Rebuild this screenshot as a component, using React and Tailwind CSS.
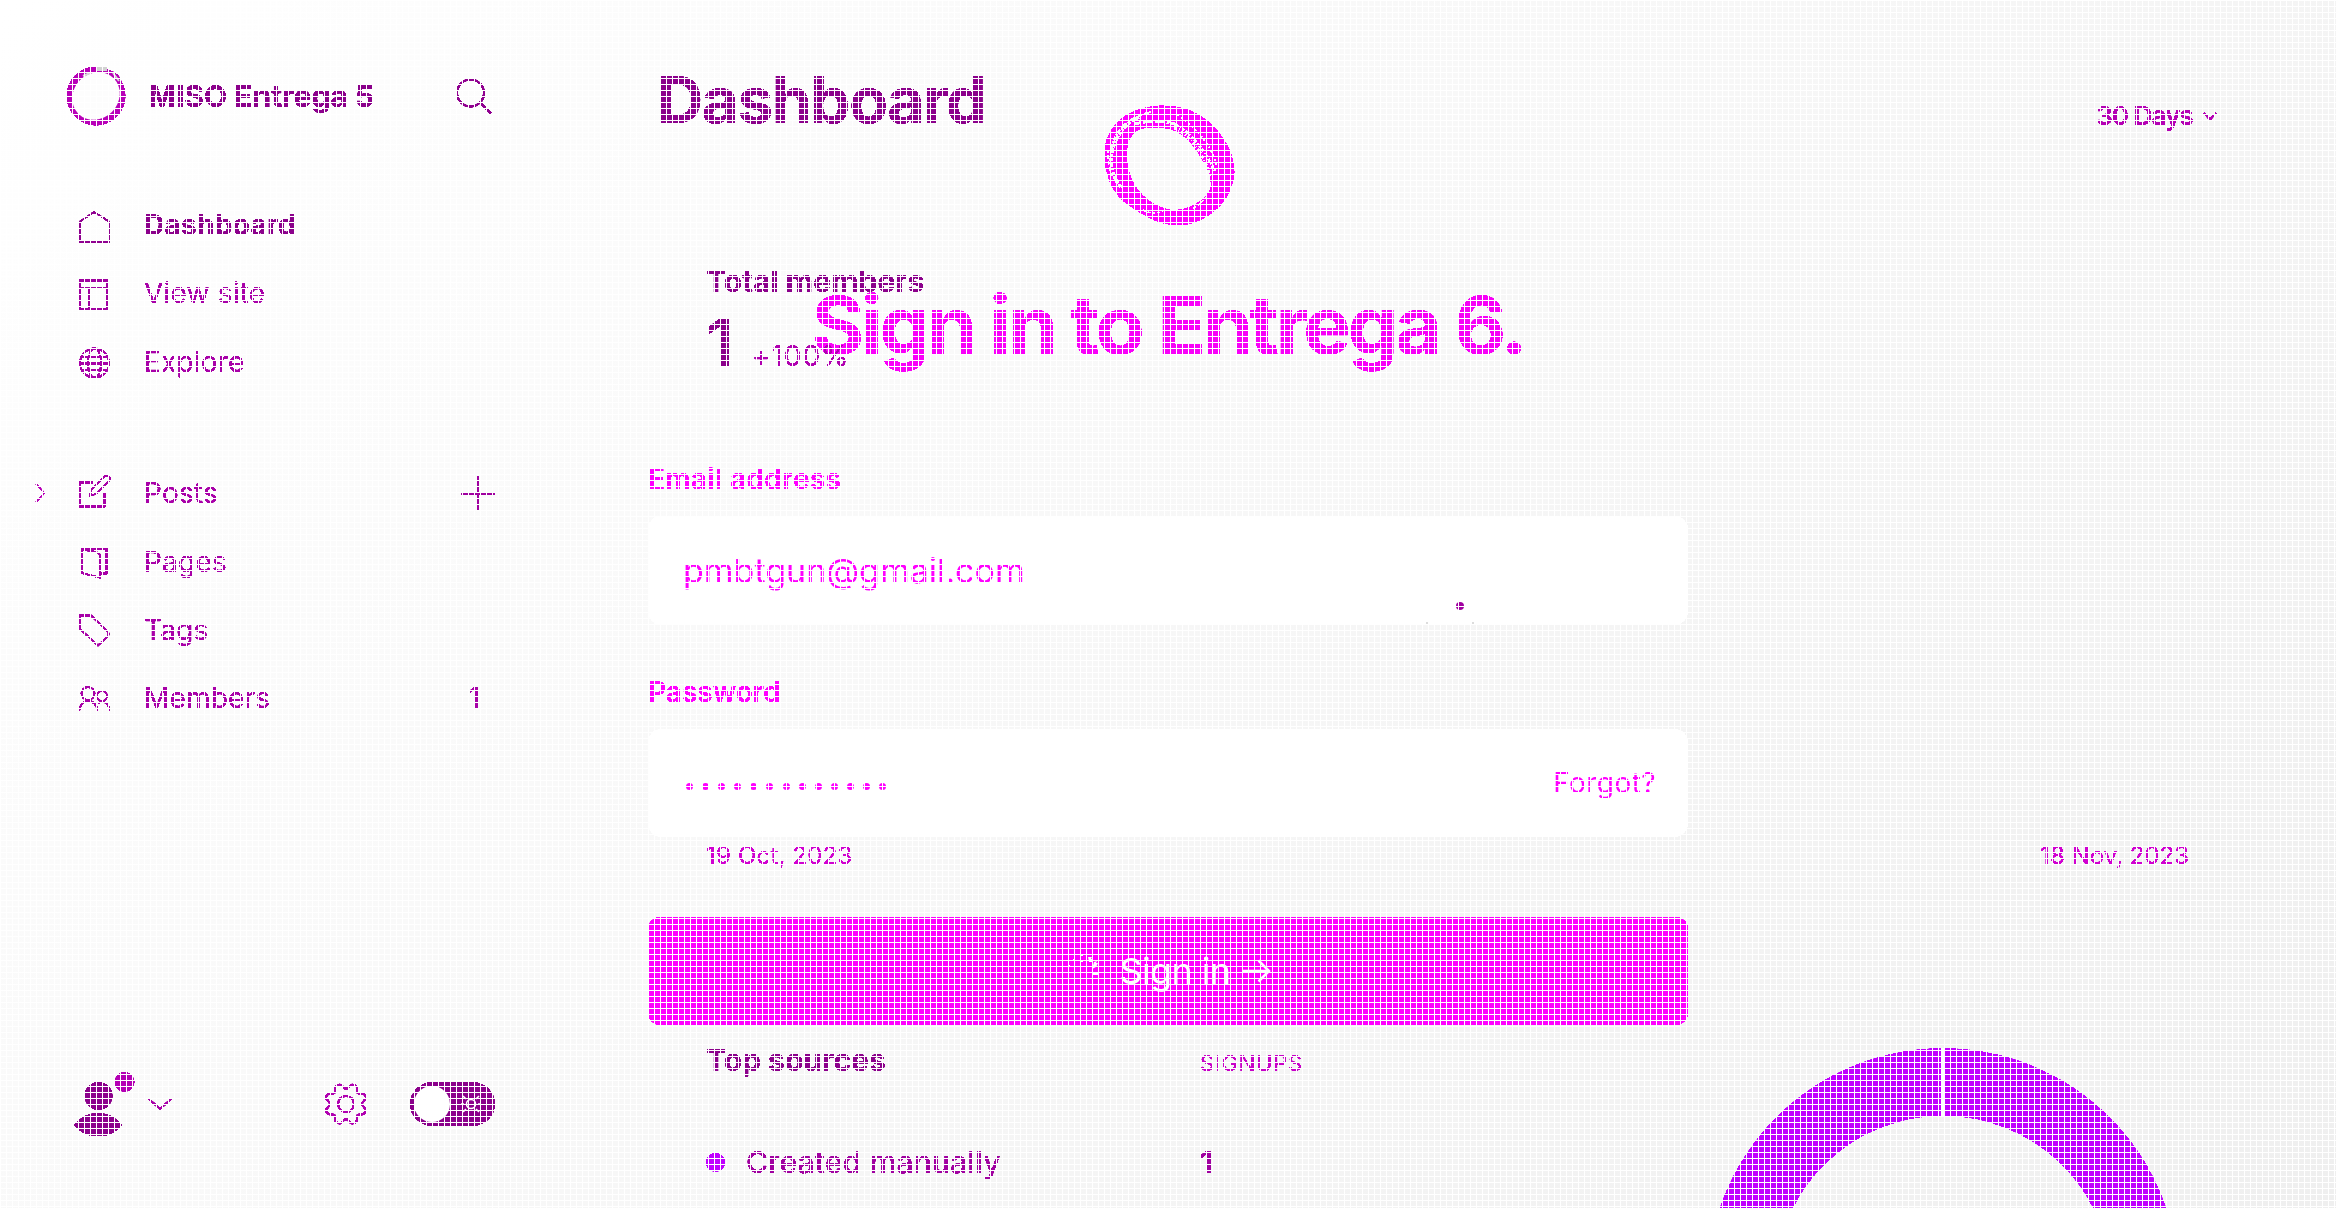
import React from "react";

// Closed smooth outline through the midpoints of a list of points
const blob = (pts) => {
  const mid = (a, b) => [(a[0] + b[0]) / 2, (a[1] + b[1]) / 2];
  const start = mid(pts[pts.length - 1], pts[0]);
  return (
    `M${start}` +
    pts.map((p, i) => `Q${p} ${mid(p, pts[(i + 1) % pts.length])}`).join("") +
    "Z"
  );
};

const bigOuter = blob([[58, -1], [90, 5], [116, 27], [130, 55], [129, 80], [115, 104], [86, 121], [58, 120], [34, 108], [10, 91], [-1, 62], [-1, 37], [11, 16], [31, 4]]);
const bigInner = blob([[57, 23], [70, 25], [88, 39], [107, 72], [104, 91], [78, 106], [54, 103], [32, 86], [22, 62], [22, 37], [33, 23]]);

function LoginLogo() {
  return (
    <svg width="130" height="120" viewBox="0 0 130 120" className="ml-[3px] block shrink-0" fill="none" shapeRendering="crispEdges">
      <path d={bigOuter + bigInner} fill="#ff00ff" fillRule="evenodd" />
      <g stroke="#f8f8f8">
        <path d="M67 18C84 26 98 42 110 66" strokeWidth="3" strokeDasharray="2 2 3 2 1 2" />
        <path d="M69 23C86 30 98 48 106 72" strokeWidth="2.5" strokeDasharray="3 2 1 2" />
        <path d="M72 10C90 22 106 38 112 62" strokeWidth="1.8" strokeDasharray="2 3 2 2" />
        <path d="M30 19C45 15 60 15 72 20" strokeWidth="3" strokeDasharray="6 2 3 1" />
        <path d="M46 7C22 12 7 28 6 48" strokeWidth="2" strokeDasharray="4 1 2 2" />
        <path d="M34 12C18 20 8 34 6 54C6 66 10 76 16 82" strokeWidth="3.5" strokeDasharray="5 1 2 2 3 1" />
        <path d="M3 46C2 64 8 76 18 84" strokeWidth="1.4" strokeDasharray="2 2 1 1" />
        <path d="M38 105C44 108 50 109 58 107M88 103C94 100 98 96 101 92" strokeWidth="1.6" strokeDasharray="3 2" />
      </g>
    </svg>
  );
}

function SiteLogo() {
  return (
    <svg width="62" height="60" viewBox="0 0 62 60" className="block shrink-0" fill="none">
      <circle cx="31" cy="30" r="29.5" fill="#b800b8" />
      <path d="M44 4Q58 8 57 22L50 16Z" fill="#b800b8" />
      <ellipse cx="31" cy="30" rx="25" ry="22.500" transform="rotate(-45 31 30)" fill="#fdfdfd" />
      <path d="M31 3H42" stroke="#d2d2d2" strokeWidth="4" />
      <path d="M18 10L25 7M48 7L54 15" stroke="#d8d8d8" strokeWidth="2" />
    </svg>
  );
}

function NavIcon({ children, color = "#a800a8" }) {
  return (
    <svg width="34" height="40" viewBox="0 0 34 40" className="block shrink-0" fill="none" stroke={color} strokeWidth="1.8">
      {children}
    </svg>
  );
}

const main = [
  {
    label: "Dashboard",
    active: true,
    icon: <NavIcon color="#900090"><path d="M2 36.5V16.5L16 7L31 16.5V36.5Z" /></NavIcon>,
  },
  {
    label: "View site",
    icon: <NavIcon color="#a000a0"><path d="M2 7.5H29.5V36H2ZM2 15H29.5M11.5 15V36" /></NavIcon>,
  },
  {
    label: "Explore",
    icon: (
      <NavIcon>
        <circle cx="16.5" cy="21" r="14.5" />
        <ellipse cx="16.5" cy="21" rx="6.5" ry="14.5" />
        <path d="M3.5 15H29.5M2 21.5H31M3.5 28H29.5" />
      </NavIcon>
    ),
  },
];

const content = [
  {
    label: "Posts",
    chevron: true,
    plus: true,
    icon: <NavIcon><path d="M15 9.5H2V33.5H26.5V19M12 22.5L13.5 16.5L26 4Q29 1 31.5 4Q33 6.5 30.5 8.5L18 21Z" /></NavIcon>,
  },
  {
    label: "Pages",
    icon: <NavIcon><path d="M4 7H28.5V31.5H22M4 7L19 10.5Q22 11 22 14V35.5L4 31Z" /></NavIcon>,
  },
  {
    label: "Tags",
    icon: <NavIcon><path d="M2 5.5H13L30 22Q31.5 24 30 26L20 35.5L2 19Z" /></NavIcon>,
  },
  {
    label: "Members",
    count: "1",
    icon: (
      <NavIcon>
        <circle cx="10" cy="15.5" r="6.5" />
        <circle cx="24" cy="18" r="5" />
        <path d="M1.5 32.5Q2.5 23 10 23Q18 23 19.5 32.5M20.5 25.5Q23 23 26 24Q31 26 31.5 32.5" />
      </NavIcon>
    ),
  },
];

function NavRow({ item }) {
  return (
    <li className="flex h-[68.3px] items-center text-[28px] leading-none tracking-[0.2px] text-[#a800a8]">
      <span className="w-11 shrink-0">
        {item.chevron && (
          <svg width="12" height="20" viewBox="0 0 12 20" fill="none" stroke="#b800b8" strokeWidth="1.6" className="block">
            <path d="M2 1L10.5 10L2 19" />
          </svg>
        )}
      </span>
      {item.icon}
      <span className={item.active ? "ml-8 font-bold tracking-[0.29px] text-[#8b008b]" : "ml-8"}>{item.label}</span>
      {item.plus && (
        <svg width="34" height="34" viewBox="0 0 34 34" fill="none" stroke="#a000a0" strokeWidth="2" className="ml-auto block">
          <path d="M17 0V34M0 17.5H34" />
        </svg>
      )}
      {item.count && <span className="mr-[15px] ml-auto">{item.count}</span>}
    </li>
  );
}

function Sidebar() {
  return (
    <aside className="flex w-[495px] shrink-0 flex-col pt-[66px] pb-[72px] pl-[34px] [filter:url(#crisp)]">
      <div className="flex h-[60px] items-center pl-[31px]">
        <SiteLogo />
        <span className="ml-[21px] text-[30px] leading-none font-bold text-[#8b008b]">MISO Entrega 5</span>
        <svg width="36" height="36" viewBox="0 0 36 36" fill="none" stroke="#900090" strokeWidth="2.2" className="mr-[3px] ml-auto block">
          <circle cx="14.5" cy="15" r="13.5" />
          <path d="M24 24.5L35 35.5" />
        </svg>
      </div>
      <ul className="mt-[64.8px]">{main.map((i) => <NavRow key={i.label} item={i} />)}</ul>
      <ul className="mt-[63.6px]">{content.map((i) => <NavRow key={i.label} item={i} />)}</ul>
      <div className="mt-auto flex h-16 items-center pl-10">
        <svg width="62" height="64" viewBox="0 0 62 64" className="block">
          <circle cx="24.5" cy="24" r="14" fill="#8b008b" />
          <path d="M0 53Q9 41 24 41Q39 41 48 53Q39 64.5 24 64.5Q9 64.5 0 53Z" fill="#8b008b" />
          <circle cx="50.5" cy="10" r="10" fill="#b400b4" />
        </svg>
        <svg width="24" height="12" viewBox="0 0 24 12" fill="none" stroke="#a800a8" strokeWidth="2" className="ml-3 block">
          <path d="M1 1L12 11L23 1" />
        </svg>
        <svg width="42" height="42" viewBox="0 0 42 42" fill="none" stroke="#b000b0" strokeWidth="2.2" className="ml-[153px] block">
          <circle cx="21" cy="21" r="8" />
          <path d="M21 5.5C23.5 6.5 24.5 1 27.5 1.5C31 2 32.5 3.5 32 7C31.7 9.5 32.5 10.5 35 10.5C38.5 10.3 40.5 11.5 41 14.5C41.2 17 37 18 37 21C37 24 41.2 25 41 27.5C40.5 30.5 38.5 31.7 35 31.5C32.5 31.5 31.7 32.5 32 35C32.5 38.5 31 40 27.5 40.5C24.5 41 23.5 35.5 21 36.5C18.5 35.5 17.5 41 14.5 40.5C11 40 9.5 38.5 10 35C10.3 32.5 9.5 31.5 7 31.5C3.5 31.7 1.5 30.5 1 27.5C.8 25 5 24 5 21C5 18 .8 17 1 14.5C1.5 11.5 3.5 10.3 7 10.5C9.5 10.5 10.3 9.5 10 7C9.5 3.5 11 2 14.5 1.5C17.5 1 18.5 6.5 21 5.5Z" />
        </svg>
        <div className="ml-auto flex h-11 w-[85px] items-center justify-between rounded-full bg-[#8b008b] pr-3.5 pl-1">
          <span className="size-9 rounded-full bg-white" />
          <svg width="20" height="20" viewBox="0 0 20 20" fill="none" stroke="#fff" strokeWidth="1.6" className="block">
            <circle cx="10" cy="10" r="4.5" />
            <path d="M0 10H3M17 10H20M2 2L5 5M15 15L18 18M2 18L5 15M15 5L18 2" />
          </svg>
        </div>
      </div>
    </aside>
  );
}

function Dashboard() {
  return (
    <main className="flex min-w-0 flex-1 flex-col pt-[68px] pr-[147px] pl-[162px] [filter:url(#crisp)]">
      <header className="flex h-16 items-end justify-between">
        <h1 className="text-[64px] leading-none font-bold tracking-[-1.49px] text-[#8b008b]">Dashboard</h1>
        <div className="-mr-7 mb-[3px] flex items-center">
          <span className="text-[26px] leading-none font-semibold tracking-[-0.9px] text-[#b400b4]">30 Days</span>
          <svg width="14" height="9" viewBox="0 0 14 9" fill="none" stroke="#b400b4" strokeWidth="2" className="ml-2.5 block">
            <path d="M1 1L7 7.5L13 1" />
          </svg>
        </div>
      </header>
      <section className="mt-[134px] ml-[49px] flex flex-col">
        <h2 className="text-[30px] leading-none font-bold text-[#8b008b]">Total members</h2>
        <div className="mt-[15px] flex h-16 items-baseline">
          <span className="w-[46px] text-[64px] leading-none font-semibold text-[#8b008b]">1</span>
          <span className="text-[28px] leading-none tracking-[0.94px] text-[#b000b0]">+100%</span>
        </div>
        <div className="mt-[469px] flex justify-between text-[24px] leading-none text-[#d000d0]">
          <span className="tracking-[0.19px]">19 Oct, 2023</span>
          <span>18 Nov, 2023</span>
        </div>
      </section>
      <section className="mt-[177px] ml-[49px] flex h-[163px] justify-between overflow-hidden">
        <div className="w-[640px]">
          <div className="flex items-baseline">
            <h2 className="w-[494px] text-[30px] leading-none font-bold text-[#8b008b]">Top sources</h2>
            <span className="text-[22px] leading-none tracking-[0.76px] text-[#c800c8]">SIGNUPS</span>
          </div>
          <div className="mt-[72px] flex items-center text-[30px] leading-none font-medium text-[#a000a0]">
            <span className="size-[19px] rounded-full bg-[#c000ff]" />
            <span className="ml-[21px] w-[454px] tracking-[0.2px]">Created manually</span>
            <span className="font-semibold">1</span>
          </div>
        </div>
        <svg width="472" height="472" viewBox="0 0 472 472" className="mt-[3px] mr-2.5 block shrink-0" fill="none">
          <circle cx="236" cy="236" r="202" stroke="#c000ff" strokeWidth="67.5" />
          <path d="M236 0V69" stroke="#fff" strokeWidth="4" />
        </svg>
      </section>
    </main>
  );
}

function Login() {
  return (
    <div className="absolute inset-0 flex flex-col items-center pt-[105px] text-[#ff00ff]">
      <LoginLogo />
      <h1 className="mt-[60px] text-[80px] leading-none font-bold tracking-[-3.14px] whitespace-nowrap mix-blend-multiply [filter:url(#crisp)]">
        Sign in to Entrega 6.
      </h1>
      <form className="mt-[100px] flex w-[1040px] flex-col [filter:url(#crisp)]">
        <label className="text-[28px] leading-none font-semibold tracking-[0.35px]">Email address</label>
        <div className="relative mt-[23px] flex h-[109px] items-center rounded-[14px] bg-white pl-[35px] text-[34px] leading-none">
          pmbtgun@gmail.com
          <span className="absolute top-[86px] left-[808px] size-2 rounded-full bg-[#a000a0]" />
          <span className="absolute top-[106px] left-[778px] size-0.5 bg-[#dcdcdc]" />
          <span className="absolute top-[106px] left-[824px] size-0.5 bg-[#dcdcdc]" />
        </div>
        <label className="mt-[53px] text-[28px] leading-none font-semibold">Password</label>
        <div className="mt-[23px] flex h-[108px] items-center justify-between rounded-[14px] bg-white pr-8 pl-[38px]">
          <div className="flex gap-[8.1px] pt-[7px]">
            {Array.from({ length: 13 }, (_, i) => (
              <span key={i} className="mr-px size-[7px] rounded-full bg-[#ff00ff]" />
            ))}
          </div>
          <span className="text-[28px] leading-none tracking-[0.43px]">Forgot?</span>
        </div>
        <div className="mt-20 flex h-[108px] items-center justify-center rounded-xl bg-[#ff00ff] pl-0.5 text-white">
          <svg width="32" height="36" viewBox="0 0 32 36" fill="#fff" className="block">
            <path d="M1 12h2v2H1zM6 6h2v2H6zM14 1h2v2h-2zM14 7h2v2h-2zM21 4h4l-1 2h2l-1 3h-3zM27 9l3-1-1 2h2l-2 4-4 2zM25 19h6v3h-6z" />
          </svg>
          <span className="ml-5 text-[36px] leading-none tracking-[-0.6px] whitespace-nowrap">Sign in</span>
          <svg width="28" height="24" viewBox="0 0 28 24" fill="none" stroke="#fff" strokeWidth="2.5" className="ml-3 block">
            <path d="M0 12H26M15.5 1.5L26 12L15.5 22.5" />
          </svg>
        </div>
      </form>
    </div>
  );
}

// Hardens soft edges of text and icons
function CrispFilter() {
  return (
    <svg width="0" height="0" className="absolute">
      <filter id="crisp" x="0" y="0" width="1" height="1" colorInterpolationFilters="sRGB">
        <feComponentTransfer>
          <feFuncA type="linear" slope="6" intercept="-1.2" />
        </feComponentTransfer>
      </filter>
    </svg>
  );
}

export default function App() {
  return (
    <div className="relative isolate flex h-[1208px] w-[2336px] overflow-hidden bg-[linear-gradient(135deg,#ffffff,#efefef)] font-['Inter',sans-serif]">
      <CrispFilter />
      <Sidebar />
      <Dashboard />
      <Login />
      {/* Fine white mesh over the whole screen */}
      <div className="pointer-events-none absolute inset-0 bg-[linear-gradient(to_right,#fff_1px,transparent_1px),linear-gradient(to_bottom,#fff_1px,transparent_1px)] bg-[size:6px_6px]" />
    </div>
  );
}
